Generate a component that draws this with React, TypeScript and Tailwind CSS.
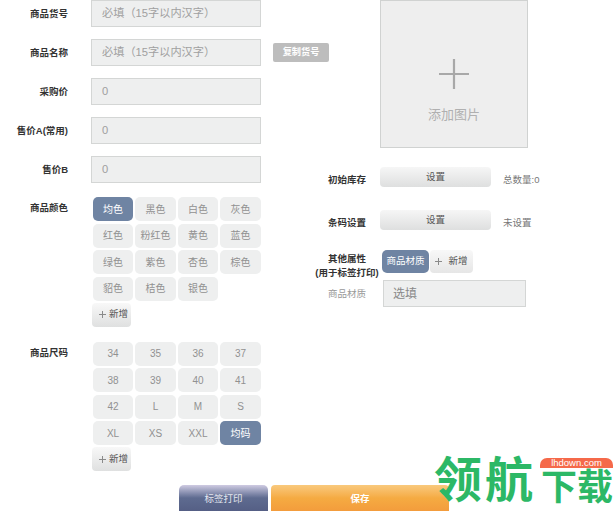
const FONT = "font-['Liberation_Sans','Noto_Sans_CJK_SC',sans-serif]";

const colors = ["均色", "黑色", "白色", "灰色", "红色", "粉红色", "黄色", "蓝色", "绿色", "紫色", "杏色", "棕色", "貂色", "桔色", "银色"];
const sizes = ["34", "35", "36", "37", "38", "39", "40", "41", "42", "L", "M", "S", "XL", "XS", "XXL", "均码"];

function Field({ label, value }: { label: string; value: string }) {
  return (
    <div className="flex h-[27px] items-start">
      <div className="w-[68px] pt-[6px] text-right text-[9.5px] leading-[15px] font-bold text-[#333]">{label}</div>
      <div className="ml-[23px] flex h-[27px] w-[170px] items-center border border-[#d4d6d5] bg-[#eeefef] pl-[10px] text-[11.2px] text-[#a0a0a0]">
        {value}
      </div>
    </div>
  );
}

function Chip({ text, active }: { text: string; active: boolean }) {
  return (
    <div
      className={
        "flex h-6 items-center justify-center rounded-[5px] text-[10px] " +
        (active ? "bg-[#6f84a3] text-white" : "bg-[#eeefef] text-[#919191]")
      }
    >
      {text}
    </div>
  );
}

function PlusIcon() {
  return (
    <svg width="7" height="7" viewBox="0 0 7 7" className="shrink-0">
      <path d="M3.5 0v7M0 3.5h7" stroke="#8a8a8a" strokeWidth="1" fill="none" />
    </svg>
  );
}

function AddButton() {
  return (
    <div className="flex h-6 w-[39px] items-center justify-end gap-[3px] rounded-[4px] bg-gradient-to-b from-[#f8f8f8] to-[#dfe0e0] pr-[3px] text-[9.5px] text-[#555]">
      <PlusIcon />
      <span>新增</span>
    </div>
  );
}

function ChipGroup({ label, items, active }: { label: string; items: string[]; active: string }) {
  return (
    <div className="flex">
      <div className="w-[68px] pt-[3px] text-right text-[9.5px] leading-[15px] font-bold text-[#333]">{label}</div>
      <div className="ml-[25px] flex flex-col">
        <div className="grid grid-cols-[40px_41px_40px_41px] gap-x-[2px] gap-y-[2.5px]">
          {items.map((item) => (
            <Chip key={item} text={item} active={item === active} />
          ))}
        </div>
        <div className="mt-[2px] -ml-[1px]">
          <AddButton />
        </div>
      </div>
    </div>
  );
}

function SettingRow({ label, note }: { label: string; note: string }) {
  return (
    <div className="flex h-5 items-center">
      <div className="w-[56px] pt-[6px] text-right text-[9.5px] font-bold text-[#333]">{label}</div>
      <div className="ml-[14px] flex h-5 w-[111px] items-center justify-center rounded-[4px] bg-gradient-to-b from-[#f6f6f6] to-[#dedfdf] text-[9.5px] text-[#555]">
        设置
      </div>
      <div className="ml-3 pt-[6px] text-[9.5px] text-[#777]">{note}</div>
    </div>
  );
}

export default function App() {
  return (
    <div className={"relative h-[511px] w-[613px] overflow-hidden bg-white " + FONT}>
      <div className="flex h-[485px]">
        {/* left column */}
        <div className="w-[310px] shrink-0">
          <div className="flex flex-col gap-3">
            <Field label="商品货号" value="必填（15字以内汉字）" />
            <div className="relative">
              <Field label="商品名称" value="必填（15字以内汉字）" />
              <div className="absolute top-[4px] left-[273px] flex h-[19px] w-[56px] items-center justify-center rounded-[2px] bg-[#bdbdbd] pt-[1px] text-[9.2px] font-bold text-white">
                复制货号
              </div>
            </div>
            <Field label="采购价" value="0" />
            <Field label="售价A(常用)" value="0" />
            <Field label="售价B" value="0" />
          </div>
          <div className="mt-[14px]">
            <ChipGroup label="商品颜色" items={colors} active="均色" />
          </div>
          <div className="mt-[15px]">
            <ChipGroup label="商品尺码" items={sizes} active="均码" />
          </div>
        </div>

        {/* right column */}
        <div className="flex-1">
          <div className="ml-[70px] flex h-[148px] w-[148px] flex-col items-center border border-[#d0d2d1] bg-[#eeeeee]">
            <svg className="mt-[58px]" width="30" height="30" viewBox="0 0 30 30">
              <path d="M15 0v30M0 15h30" stroke="#a8a8a8" strokeWidth="2.2" fill="none" />
            </svg>
            <div className="mt-[16px] text-[13px] text-[#b0b0b0]">添加图片</div>
          </div>
          <div className="mt-[19px]">
            <SettingRow label="初始库存" note="总数量:0" />
          </div>
          <div className="mt-[23px]">
            <SettingRow label="条码设置" note="未设置" />
          </div>
          <div className="mt-5 flex">
            <div className="w-[70px] pt-[2px] text-center text-[9.5px] leading-[14px] font-bold text-[#333]">
              <div className="pl-[4px]">其他属性</div>
              <div className="-mx-[2px] whitespace-nowrap pl-[4px]">(用于标签打印)</div>
            </div>
            <div className="ml-[2px] flex h-[23px]">
              <div className="flex w-[47px] items-center justify-center rounded-[5px] bg-[#6f84a3] text-[9.5px] text-white">
                商品材质
              </div>
              <div className="ml-[1px] flex w-[43px] items-center justify-center gap-[6px] rounded-[4px] bg-gradient-to-b from-[#f8f8f8] to-[#e6e6e6] text-[9.5px] text-[#555]">
                <PlusIcon />
                <span>新增</span>
              </div>
            </div>
          </div>
          <div className="flex h-[27px] items-center">
            <div className="w-[56px] pt-[1px] text-right text-[9.5px] text-[#999]">商品材质</div>
            <div className="ml-[17px] flex h-[27px] w-[143px] items-center border border-[#d4d6d5] bg-[#eeefef] pl-[9px] text-[12px] text-[#888]">
              选填
            </div>
          </div>
        </div>
      </div>

      {/* bottom buttons */}
      <div className="flex h-[26px] gap-[3px] pl-[179px]">
        <div className="flex w-[89px] items-center justify-center rounded-t-[5px] bg-gradient-to-b from-[#cfcbe2] via-[#5e6b90] to-[#555f85] pt-[3px] text-[9.5px] text-[#e4e6ee]">
          标签打印
        </div>
        <div className="flex w-[178px] items-center justify-center rounded-t-[4px] bg-gradient-to-b from-[#f9c97c] via-[#f5ab42] to-[#f39c3c] pt-[3px] text-[9.5px] font-bold text-white">
          保存
        </div>
      </div>

      {/* watermark */}
      <div className="absolute top-[445px] left-[434px] flex h-[60px] w-[179px] items-end whitespace-nowrap font-bold text-[#2cb866]">
        <span className="text-[48px] leading-[48px] tracking-[3px]">领航</span>
        <span className="ml-[5px] text-[36px] leading-[34px]">下载</span>
      </div>
      <div className="absolute top-[458px] left-[540px] flex h-[10px] w-[73px] items-center justify-center rounded-t-[7px] bg-[#f5694a] text-[9.5px] leading-none text-white">
        lhdown.com
      </div>
    </div>
  );
}
